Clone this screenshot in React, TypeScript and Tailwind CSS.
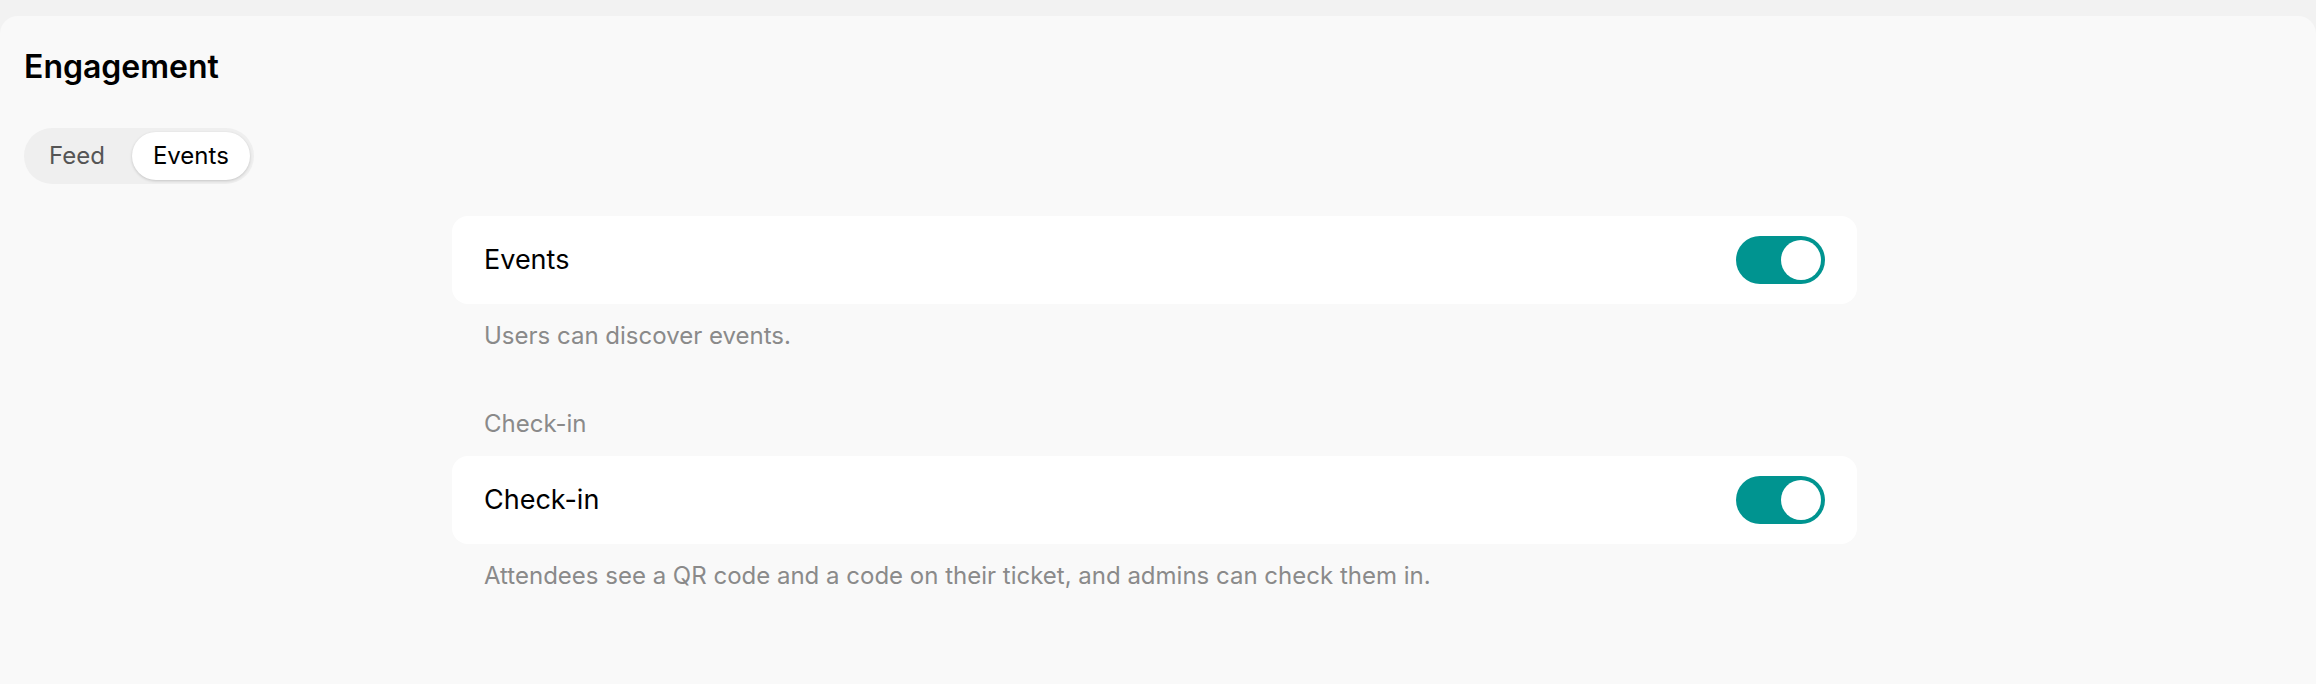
import { useState } from "react";

function Toggle({ on, onChange }: { on: boolean; onChange: () => void }) {
  return (
    <button
      onClick={onChange}
      className={`flex h-12 w-[89px] items-center rounded-full px-1 transition-colors ${
        on ? "justify-end bg-[#009490]" : "justify-start bg-[#d4d4d4]"
      }`}
    >
      <span className="h-10 w-10 rounded-full bg-white" />
    </button>
  );
}

function SettingRow({
  title,
  description,
  on,
  onChange,
}: {
  title: string;
  description: string;
  on: boolean;
  onChange: () => void;
}) {
  return (
    <div>
      <div className="flex h-[88px] items-center justify-between rounded-2xl bg-white px-8">
        <span className="text-[27px] text-black">{title}</span>
        <Toggle on={on} onChange={onChange} />
      </div>
      <p className="mt-4 px-8 text-[24px] leading-8 text-[#8a8a8a]">{description}</p>
    </div>
  );
}

export default function App() {
  const [tab, setTab] = useState("Events");
  const [events, setEvents] = useState(true);
  const [checkIn, setCheckIn] = useState(true);

  return (
    <div className="min-h-screen bg-[#f2f2f2] pt-4 font-['Inter',sans-serif]">
      <div className="min-h-[668px] rounded-t-[18px] bg-[#f9f9f9] px-6 pt-[31px]">
        <h1 className="text-[32px] leading-10 font-semibold text-black">Engagement</h1>

        <div className="mt-[41px] inline-flex gap-1.5 rounded-full bg-[#efefef] p-1">
          {["Feed", "Events"].map((t) => (
            <button
              key={t}
              onClick={() => setTab(t)}
              className={`h-12 rounded-full px-[21px] text-[24px] ${
                tab === t
                  ? "bg-white text-black shadow-[0_1px_3px_rgba(0,0,0,0.18)]"
                  : "text-[#555555]"
              }`}
            >
              {t}
            </button>
          ))}
        </div>

        <div className="ml-[428px] mt-8 w-[1405px]">
          <SettingRow
            title="Events"
            description="Users can discover events."
            on={events}
            onChange={() => setEvents(!events)}
          />

          <p className="mt-14 mb-4 px-8 text-[24px] leading-8 text-[#8a8a8a]">Check-in</p>

          <SettingRow
            title="Check-in"
            description="Attendees see a QR code and a code on their ticket, and admins can check them in."
            on={checkIn}
            onChange={() => setCheckIn(!checkIn)}
          />
        </div>
      </div>
    </div>
  );
}
